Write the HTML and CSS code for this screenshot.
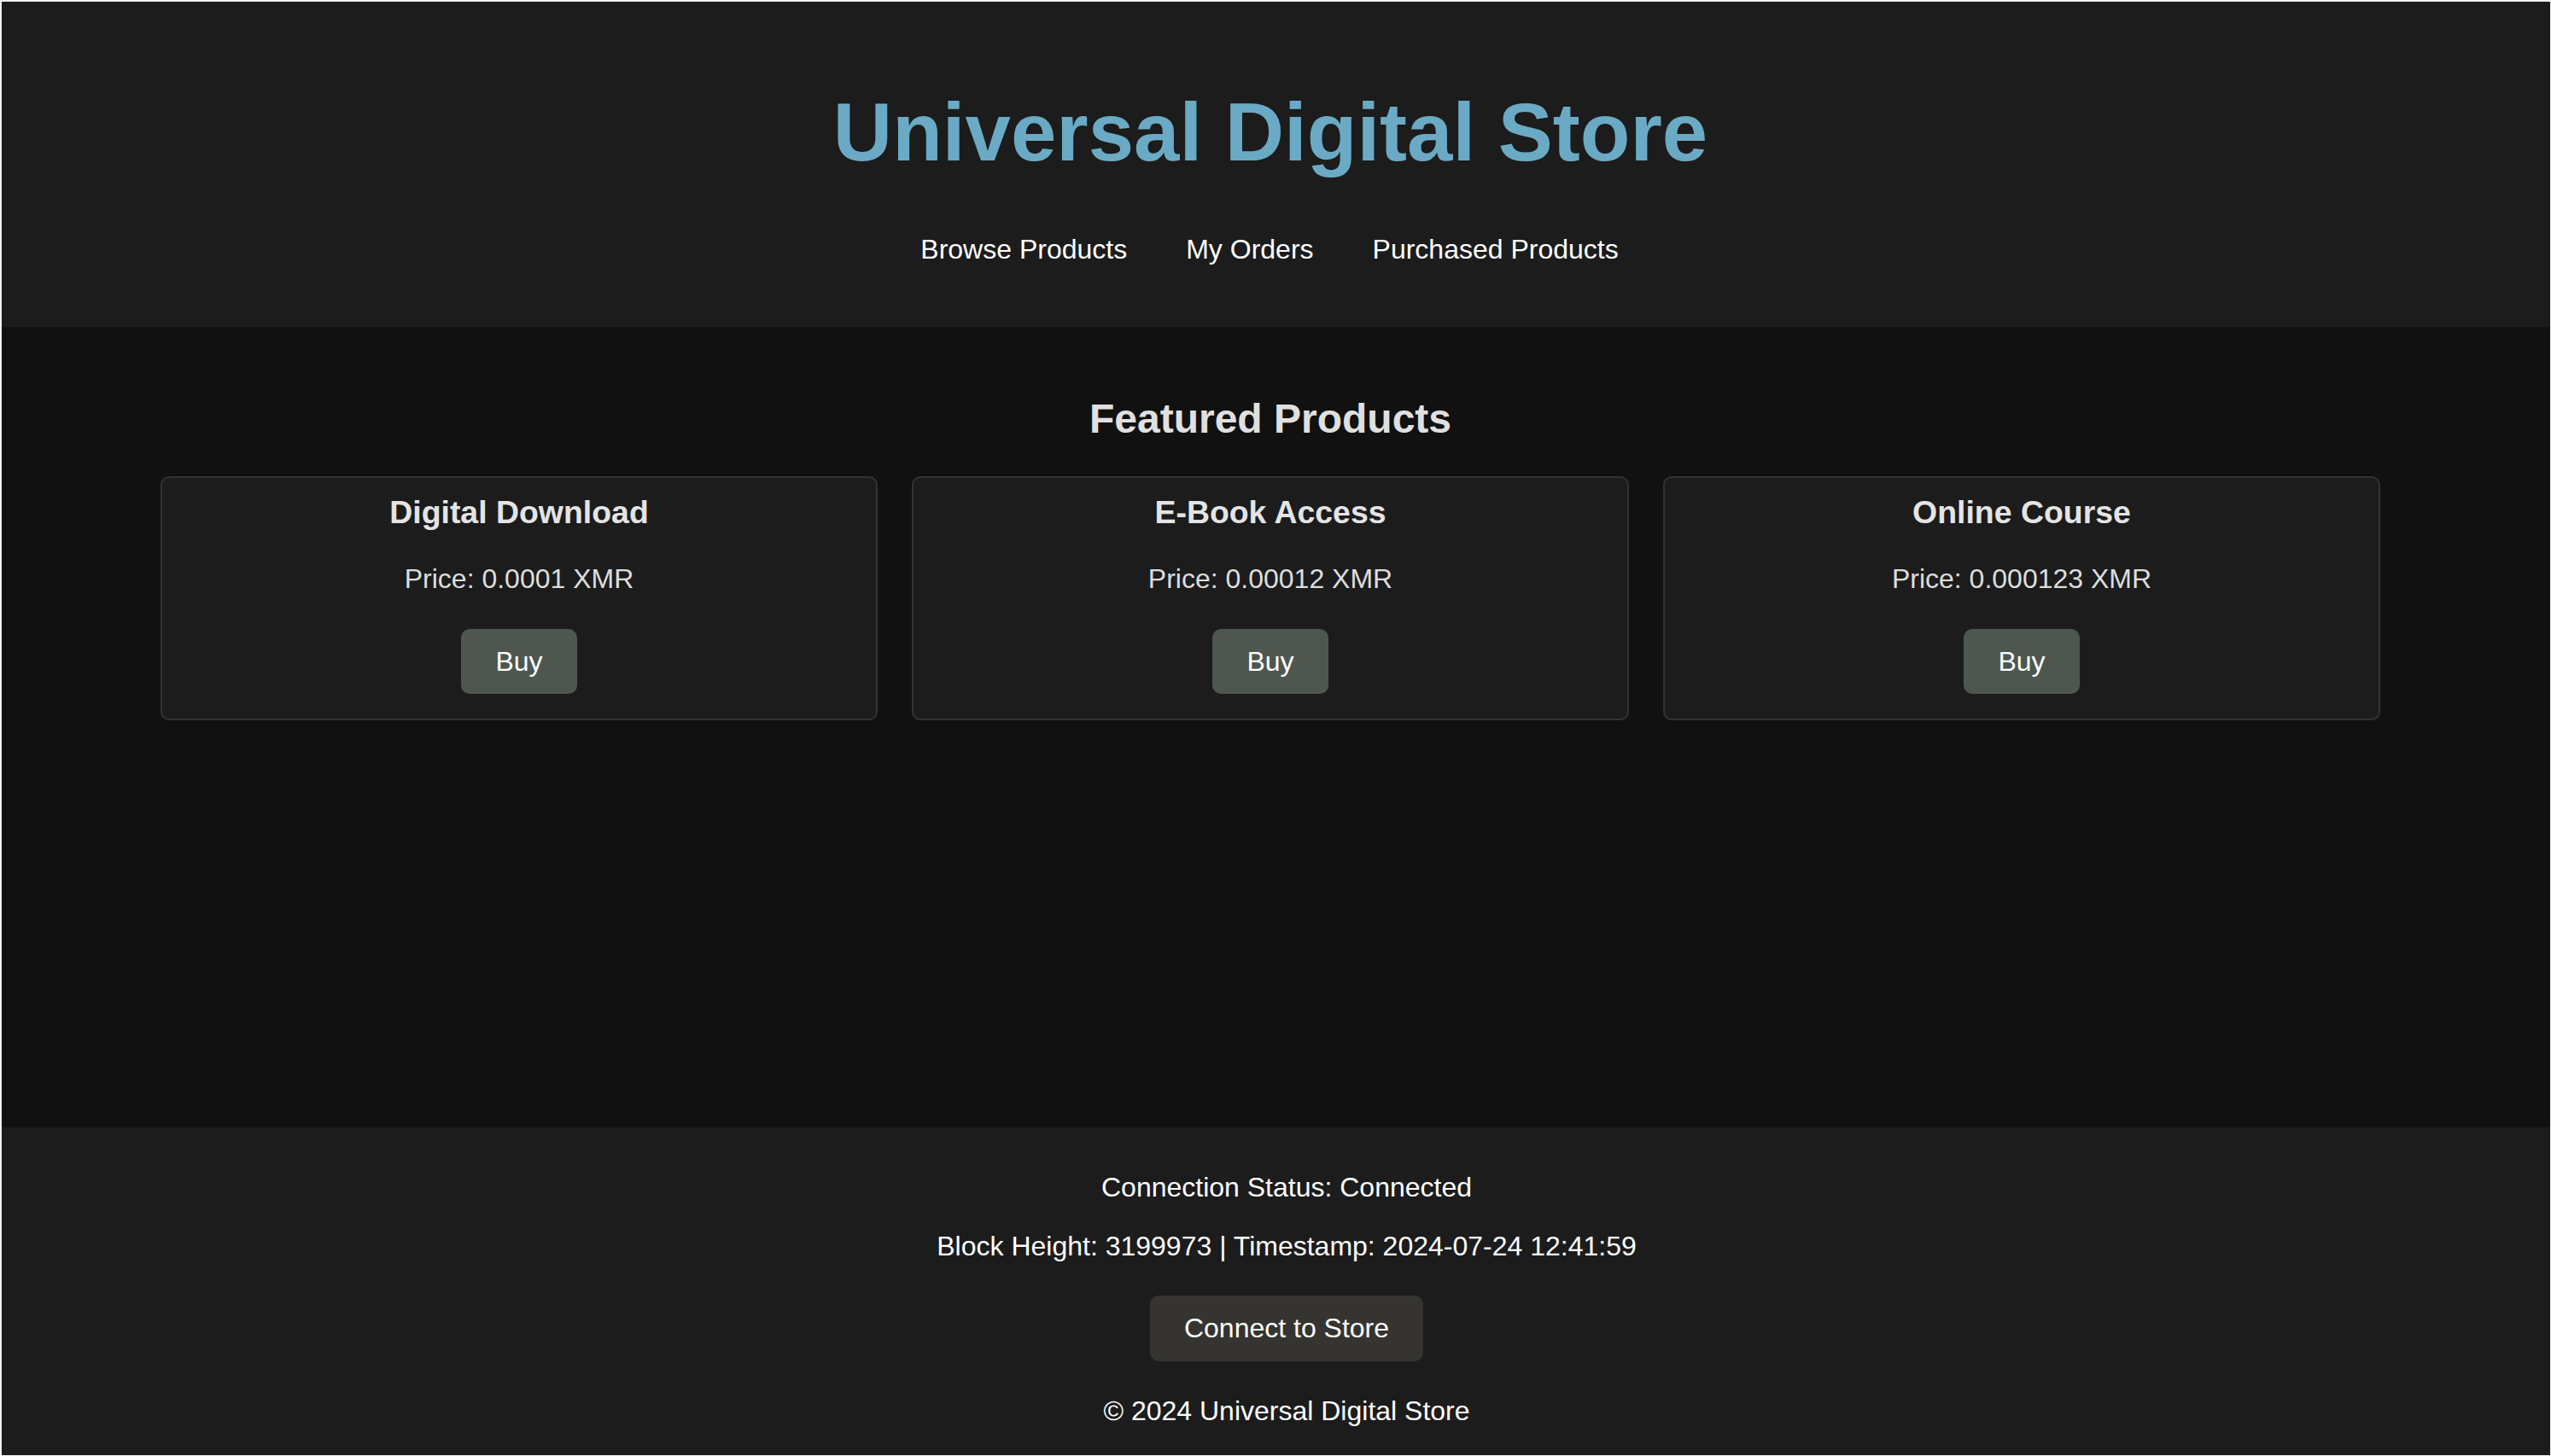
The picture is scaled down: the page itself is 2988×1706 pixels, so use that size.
FILE: index.html
```html
<!DOCTYPE html>
<html lang="en">
<head>
<meta charset="utf-8">
<title>Universal Digital Store</title>
<link rel="stylesheet" href="styles.css">
</head>
<body>
  <header class="site-header">
    <h1 class="site-title">Universal Digital Store</h1>
    <nav class="site-nav">
      <a href="#" class="nav-link">Browse Products</a>
      <a href="#" class="nav-link">My Orders</a>
      <a href="#" class="nav-link">Purchased Products</a>
    </nav>
  </header>
  <main class="site-main">
    <h2 class="section-title">Featured Products</h2>
    <div class="products">
      <div class="product-card">
        <h3 class="product-name">Digital Download</h3>
        <p class="product-price">Price: 0.0001 XMR</p>
        <button class="buy-btn">Buy</button>
      </div>
      <div class="product-card">
        <h3 class="product-name">E-Book Access</h3>
        <p class="product-price">Price: 0.00012 XMR</p>
        <button class="buy-btn">Buy</button>
      </div>
      <div class="product-card">
        <h3 class="product-name">Online Course</h3>
        <p class="product-price">Price: 0.000123 XMR</p>
        <button class="buy-btn">Buy</button>
      </div>
    </div>
  </main>
  <footer class="site-footer">
    <p class="footer-line">Connection Status: Connected</p>
    <p class="footer-line">Block Height: 3199973 | Timestamp: 2024-07-24 12:41:59</p>
    <button class="connect-btn">Connect to Store</button>
    <p class="footer-line">&copy; 2024 Universal Digital Store</p>
  </footer>
</body>
</html>
```
FILE: styles.css
```css
* {
  box-sizing: border-box;
}

html, body {
  margin: 0;
  padding: 0;
}

body {
  height: 1706px;
  display: flex;
  flex-direction: column;
  background: #111111;
  color: #e0e0e0;
  font-family: "Liberation Sans", Arial, sans-serif;
  font-size: 32px;
  line-height: 1.15;
  overflow: hidden;
}

body::after {
  content: "";
  position: fixed;
  inset: 0;
  border-top: 2px solid #f2f2f2;
  border-left: 2px solid #f2f2f2;
  border-right: 1px solid #f2f2f2;
  border-bottom: 1px solid #f2f2f2;
  pointer-events: none;
}

.site-header {
  flex-shrink: 0;
  background: #1c1c1c;
  text-align: center;
  padding: 36px 52px 40px 40px;
}

.site-title {
  margin: 64px 0;
  font-size: 96px;
  line-height: 1.15;
  font-weight: bold;
  color: #6aaac5;
}

.site-nav {
  display: flex;
  justify-content: center;
  gap: 69px;
  margin: 0 0 32px;
  padding-right: 2px;
}

.nav-link {
  color: #ffffff;
  text-decoration: none;
  font-size: 32px;
  line-height: 1.15;
}

.site-main {
  flex: 1;
  padding: 40px 52px 40px 40px;
}

.section-title {
  margin: 40px 0;
  text-align: center;
  font-size: 48px;
  line-height: 1.15;
  font-weight: bold;
  color: #e0e0e0;
}

.products {
  width: 2600px;
  margin: 0 auto;
  display: grid;
  grid-template-columns: repeat(3, 1fr);
  gap: 40px;
}

.product-card {
  background: #1c1c1c;
  border: 2px solid #333333;
  border-radius: 10px;
  padding: 19px 20px 29px;
  text-align: center;
}

.product-name {
  margin: 0 0 37.44px;
  font-size: 37.44px;
  line-height: 1.15;
  font-weight: bold;
  color: #e4e4e4;
}

.product-price {
  margin: 0 0 32px;
  font-size: 32px;
  line-height: 1.15;
  color: #dddddd;
}

.buy-btn {
  display: block;
  margin: 40px auto 0;
  padding: 20px 40px;
  border: none;
  border-radius: 10px;
  background: #4d5750;
  color: #ffffff;
  font-family: "Liberation Sans", Arial, sans-serif;
  font-size: 32px;
  line-height: 1.15;
}

.site-footer {
  flex-shrink: 0;
  background: #1c1c1c;
  color: #ffffff;
  text-align: center;
  padding: 20px 40px 2px 66px;
}

.footer-line {
  margin: 32px 0;
  font-size: 32px;
  line-height: 1.15;
}

.connect-btn {
  display: block;
  margin: 40px auto;
  padding: 20px 40px;
  border: none;
  border-radius: 10px;
  background: #363430;
  color: #ffffff;
  font-family: "Liberation Sans", Arial, sans-serif;
  font-size: 32px;
  line-height: 1.15;
}
```
